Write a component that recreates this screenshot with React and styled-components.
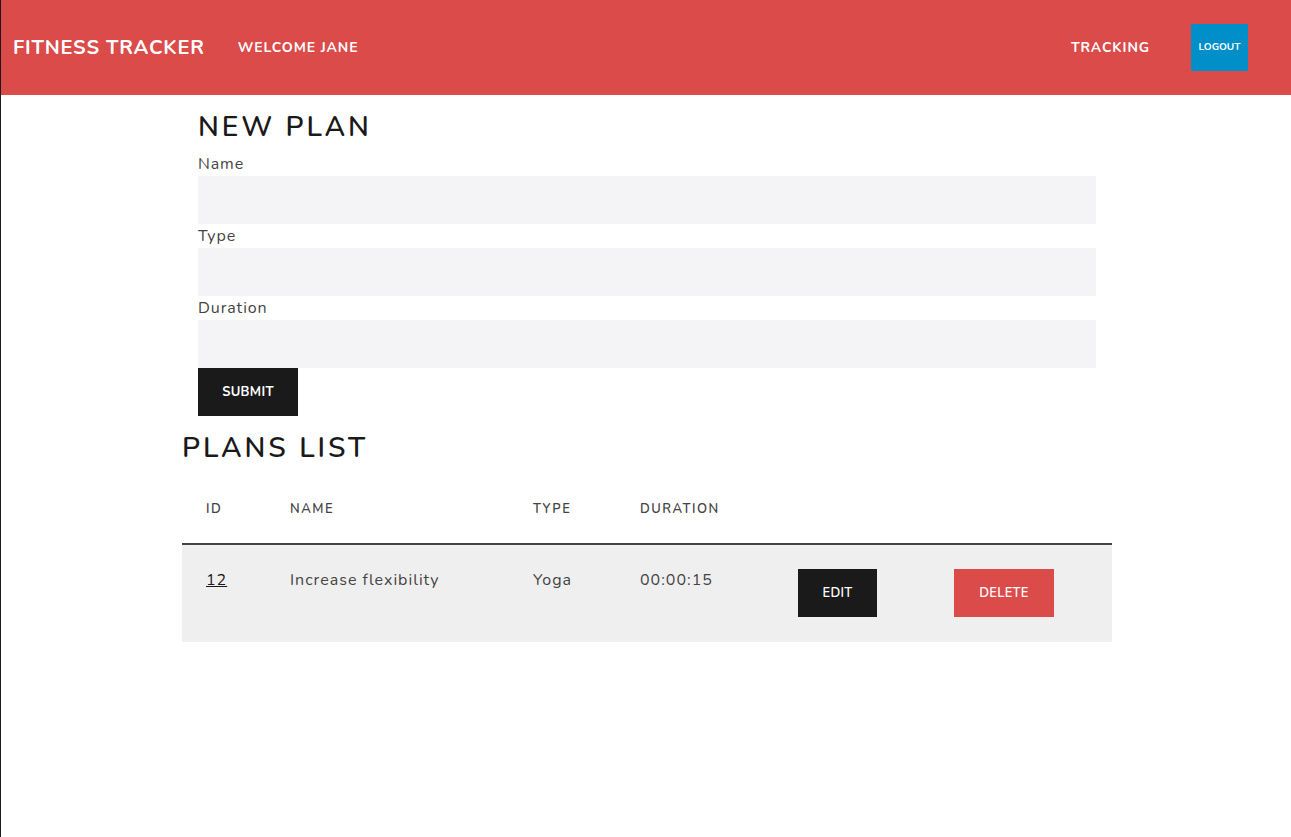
import React, { useState } from 'react';
import styled, { createGlobalStyle } from 'styled-components';

const GlobalStyle = createGlobalStyle`
  html, body {
    margin: 0;
    padding: 0;
    background: #ffffff;
  }
  body {
    font-family: "Nunito", "Open Sans", "Noto Sans", sans-serif;
    color: #1a1a1a;
  }
`;

const Page = styled.div`
  min-height: 837px;
  border-left: 1px solid #1a1a1a;
  box-sizing: border-box;
`;

const NavBar = styled.header`
  height: 95px;
  background: #da4b4a;
  display: flex;
  align-items: center;
  padding: 0 43px 0 12px;
`;

const Brand = styled.div`
  color: #fff;
  font-size: 20px;
  font-weight: 700;
  letter-spacing: 0.8px;
  margin-right: 33px;
  margin-bottom: 1px;
`;

const NavText = styled.div`
  color: #fff;
  font-size: 14px;
  font-weight: 700;
  letter-spacing: 0.9px;
  margin-bottom: 1px;
`;

const NavRight = styled.nav`
  margin-left: auto;
  display: flex;
  align-items: center;
  gap: 41px;
`;

const LogoutButton = styled.button`
  width: 57px;
  height: 47px;
  border: none;
  background: #008fc8;
  color: #fff;
  font-family: inherit;
  font-size: 10px;
  font-weight: 700;
  padding: 0;
  margin-bottom: 1px;
`;

const Container = styled.main`
  width: 930px;
  padding-left: 2px;
  margin: 0 auto;
`;

const Form = styled.form`
  padding: 0 16px;
  display: flex;
  flex-direction: column;
`;

const Heading = styled.h2`
  margin: ${(p) => p.$top || 0}px 0 0;
  font-size: 28px;
  font-weight: 600;
  letter-spacing: 3px;
  line-height: 36px;
  color: #1a1a1a;
`;

const Label = styled.label`
  font-size: 16px;
  letter-spacing: 0.9px;
  color: #444;
  line-height: 22px;
  margin-top: ${(p) => p.$top || 0}px;
  margin-bottom: 1px;
`;

const Input = styled.input`
  height: 48px;
  border: none;
  background: #f4f4f6;
  box-sizing: border-box;
  padding: 0 12px;
  font-family: inherit;
  font-size: 15px;
  outline: none;
`;

const Button = styled.button`
  height: 48px;
  width: ${(p) => p.$width}px;
  border: none;
  background: ${(p) => (p.$danger ? '#da4b4a' : '#1a1a1a')};
  color: #fff;
  font-family: inherit;
  font-size: 13px;
  font-weight: ${(p) => (p.$light ? 600 : 700)};
  letter-spacing: 0.3px;
  padding: 0;
  cursor: pointer;
`;

const Table = styled.table`
  width: 930px;
  border-collapse: collapse;
  margin-top: 9px;
  table-layout: fixed;
`;

const Th = styled.th`
  text-align: left;
  padding: 24px;
  font-size: 13px;
  font-weight: 600;
  letter-spacing: 1.5px;
  color: #444;
  line-height: 20px;
  border-bottom: 2px solid #444;
`;

const Row = styled.tr`
  background: #efefef;
`;

const Td = styled.td`
  vertical-align: top;
  padding: 24px 24px 25px;
  font-size: 16px;
  letter-spacing: 1px;
  color: #444;
  line-height: 22px;
`;

const IdLink = styled.a`
  color: #1a1a1a;
  text-decoration: underline;
`;

const columns = [
  { label: 'ID', width: 84 },
  { label: 'NAME', width: 243 },
  { label: 'TYPE', width: 107 },
  { label: 'DURATION', width: 158 },
  { label: '', width: 156 },
  { label: '', width: 182 },
];

const plans = [
  { id: 12, name: 'Increase flexibility', type: 'Yoga', duration: '00:00:15' },
];

const App = () => {
  const [form, setForm] = useState({ name: '', type: '', duration: '' });
  const update = (key) => (e) => setForm({ ...form, [key]: e.target.value });

  return (
    <Page>
      <GlobalStyle />
      <NavBar>
        <Brand>FITNESS TRACKER</Brand>
        <NavText>WELCOME JANE</NavText>
        <NavRight>
          <NavText>TRACKING</NavText>
          <LogoutButton>LOGOUT</LogoutButton>
        </NavRight>
      </NavBar>
      <Container>
        <Form onSubmit={(e) => e.preventDefault()}>
          <Heading $top={14}>NEW PLAN</Heading>
          <Label $top={8}>Name</Label>
          <Input value={form.name} onChange={update('name')} />
          <Label $top={1}>Type</Label>
          <Input value={form.type} onChange={update('type')} />
          <Label $top={1}>Duration</Label>
          <Input value={form.duration} onChange={update('duration')} />
          <div>
            <Button $width={100} type="submit">SUBMIT</Button>
          </div>
        </Form>
        <Heading $top={14}>PLANS LIST</Heading>
        <Table>
          <colgroup>
            {columns.map((c, i) => (
              <col key={i} style={{ width: c.width }} />
            ))}
          </colgroup>
          <thead>
            <tr>
              {columns.map((c, i) => (
                <Th key={i}>{c.label}</Th>
              ))}
            </tr>
          </thead>
          <tbody>
            {plans.map((p) => (
              <Row key={p.id}>
                <Td>
                  <IdLink href="#">{p.id}</IdLink>
                </Td>
                <Td>{p.name}</Td>
                <Td>{p.type}</Td>
                <Td>{p.duration}</Td>
                <Td>
                  <Button $width={79} $light>EDIT</Button>
                </Td>
                <Td>
                  <Button $width={100} $danger $light>DELETE</Button>
                </Td>
              </Row>
            ))}
          </tbody>
        </Table>
      </Container>
    </Page>
  );
};

export default App;
